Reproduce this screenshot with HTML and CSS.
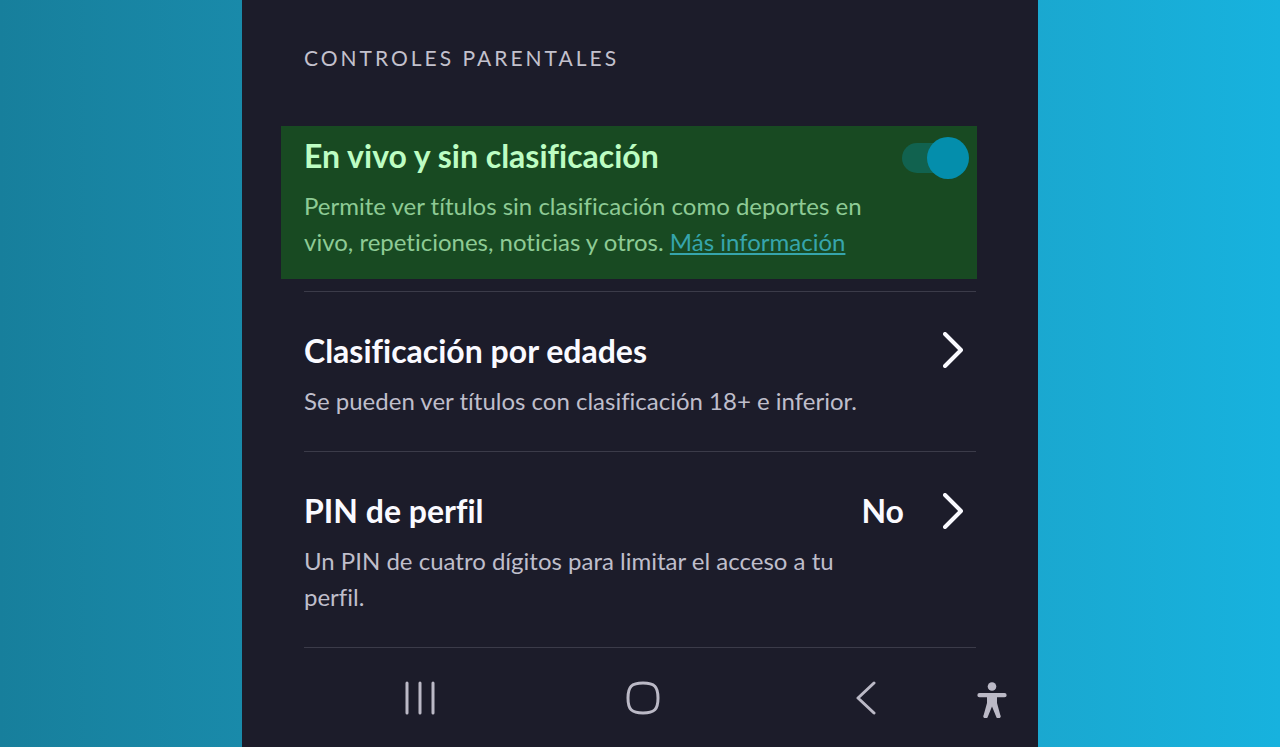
FILE: index.html
```html
<!DOCTYPE html>
<html lang="es">
<head>
    <meta charset="UTF-8">
    <meta name="viewport" content="width=device-width, initial-scale=1.0">
    <title>Controles parentales</title>
    <link rel="stylesheet" href="styles.css">
</head>
<body>
    <div class="phone">
        <main class="settings">
            <h1>CONTROLES PARENTALES</h1>

            <!-- Live and unrated -->
            <section class="setting">
                <div class="highlight">
                    <div class="setting-head">
                        <h2><label for="liveToggle">En vivo y sin clasificación</label></h2>
                        <input type="checkbox" class="toggle" id="liveToggle" checked>
                    </div>
                    <p>Permite ver títulos sin clasificación como deportes en vivo, repeticiones, noticias y otros. <a href="#">Más información</a></p>
                </div>
            </section>

            <!-- Age rating -->
            <section class="setting">
                <div class="setting-head">
                    <h2>Clasificación por edades</h2>
                    <button class="open-button" aria-label="Clasificación por edades">
                        <svg width="20" height="36" viewBox="0 0 20 36"><path d="M2 2 18 18 2 34"/></svg>
                    </button>
                </div>
                <p>Se pueden ver títulos con clasificación 18+ e inferior.</p>
            </section>

            <!-- Profile PIN -->
            <section class="setting">
                <div class="setting-head">
                    <h2>PIN de perfil</h2>
                    <button class="open-button" aria-label="PIN de perfil">
                        <span>No</span>
                        <svg width="20" height="36" viewBox="0 0 20 36"><path d="M2 2 18 18 2 34"/></svg>
                    </button>
                </div>
                <p>Un PIN de cuatro dígitos para limitar el acceso a tu perfil.</p>
            </section>
        </main>

        <nav class="nav-bar">
            <button aria-label="Recientes">
                <svg width="32" height="34" viewBox="0 0 32 34"><path d="M3 2V32M16 2V32M29 2V32"/></svg>
            </button>
            <button aria-label="Inicio">
                <svg width="34" height="34" viewBox="0 0 34 34"><path d="M17 2C28.500 2 32 5.500 32 17S28.500 32 17 32 2 28.500 2 17 5.500 2 17 2Z"/></svg>
            </button>
            <button aria-label="Atrás">
                <svg width="20" height="34" viewBox="0 0 20 34"><path d="M18 2 2 17 18 32"/></svg>
            </button>
            <button aria-label="Accesibilidad">
                <svg class="person" width="30" height="36" viewBox="0 0 30 36"><circle cx="15" cy="4.500" r="4.300"/><path d="M2.500 11H27.500A2 2 0 0 1 27.500 15.300H20V21L23.300 33A2 2 0 0 1 19.500 35.400L15 24.500 10.500 35.400A2 2 0 0 1 6.700 33L10 21V15.300H2.500A2 2 0 0 1 2.500 11Z"/></svg>
            </button>
        </nav>
    </div>
</body>
</html>
```
FILE: styles.css
```css
* {
    box-sizing: border-box;
}
body {
    margin: 0;
    min-height: 100vh;
    display: flex;
    justify-content: center;
    font-family: 'Lato', sans-serif;
    font-variant-ligatures: none;
    background: linear-gradient(to right, #177f9c, #198aaa 19%, #1aa8d0 81%, #17b2de);
}
.phone {
    width: 100%;
    max-width: 796px;
    background: #1c1c2a;
    color: #fafaff;
}
.settings {
    padding: 0 62px;
}
h1 {
    margin: 0;
    padding: 43px 0 53px;
    font-size: 21px;
    line-height: 30px;
    font-weight: 400;
    letter-spacing: 3px;
    color: #c3c1cd;
}
.setting {
    padding: 40px 0 32px;
    border-bottom: 1px solid #3b3b49;
}
.setting:first-of-type {
    padding: 0 0 12px;
}
.highlight {
    margin: 0 -1px 0 -23px;
    padding: 11px 8px 19px 23px;
    background: #184a22;
}
.setting-head {
    display: flex;
    justify-content: space-between;
    align-items: flex-start;
    height: 38px;
}
h2 {
    margin: 0;
    font-size: 32px;
    line-height: 38px;
    font-weight: 700;
}
p {
    margin: 13px 0 0;
    max-width: 570px;
    font-size: 24px;
    line-height: 36px;
    color: #bfbecb;
}
.highlight h2 {
    color: #bdfdc3;
}
.highlight p {
    color: #8ecb95;
}
.highlight a {
    color: #36a5ac;
    text-decoration-thickness: 2px;
    text-underline-offset: 2px;
}
.toggle {
    appearance: none;
    flex: none;
    position: relative;
    width: 67px;
    height: 42px;
    margin: 0;
    cursor: pointer;
}
.toggle::before,
.toggle::after {
    content: "";
    position: absolute;
}
.toggle::before {
    inset: 6px 5px 6px 0;
    border-radius: 15px;
    background: #11624f;
}
.toggle::after {
    top: 0;
    left: 0;
    width: 42px;
    height: 42px;
    border-radius: 50%;
    background: #048eac;
}
.toggle:checked::after {
    left: 25px;
}
button {
    padding: 0;
    border: none;
    background: none;
    font-family: inherit;
    color: inherit;
    cursor: pointer;
}
svg {
    display: block;
    fill: none;
    stroke: currentColor;
    stroke-width: 4;
    stroke-linecap: round;
    stroke-linejoin: round;
}
.open-button {
    display: flex;
    align-items: center;
    gap: 39px;
    margin-right: 13px;
    font-size: 32px;
    line-height: 38px;
    font-weight: 700;
}
.nav-bar {
    display: grid;
    grid-template-columns: 1fr 1fr 1fr 30px;
    padding: 30px 31px 29px 67px;
    color: #bbb9c6;
}
.nav-bar button {
    display: flex;
    justify-content: center;
    align-items: center;
    height: 40px;
}
.nav-bar svg {
    stroke-width: 3;
}
.nav-bar .person {
    margin-top: 4px;
    fill: currentColor;
    stroke: none;
}
```
